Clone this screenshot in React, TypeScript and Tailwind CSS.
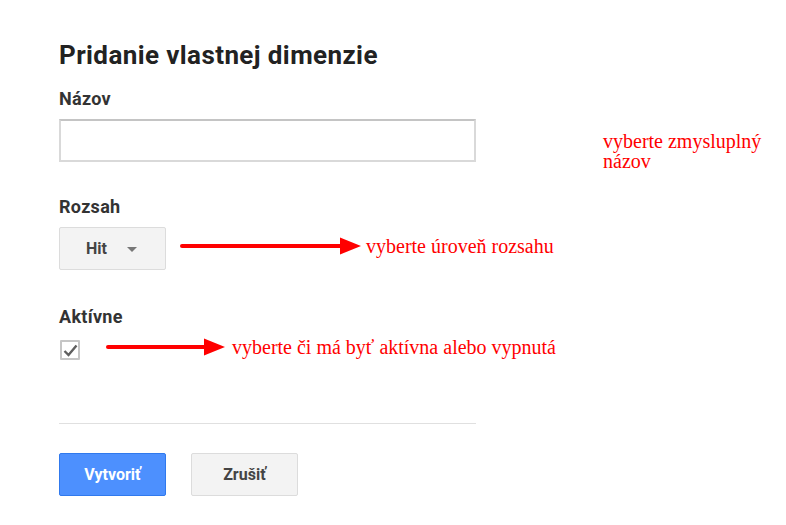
import React from "react";

// Pridanie vlastnej dimenzie — form with red annotations

function Arrow({ width }: { width: number }) {
  return (
    <svg width={width} height={18} viewBox={`0 0 ${width} 18`} className="shrink-0">
      <line x1={2} y1={9} x2={width - 18} y2={9} stroke="#ff0000" strokeWidth={4} strokeLinecap="round" />
      <polygon points={`${width - 21},0.5 ${width},9 ${width - 21},17.5`} fill="#ff0000" />
    </svg>
  );
}

function Note({ children, className = "" }: { children: React.ReactNode; className?: string }) {
  return (
    <span className={`font-['Liberation_Serif',serif] text-[20px] text-[#ff0000] ${className}`}>
      {children}
    </span>
  );
}

export default function App() {
  return (
    <div className="min-h-[525px] w-[786px] bg-white pl-[59px] pt-[38px] font-['Roboto',sans-serif] text-[#333]">
      <h1 className="text-[26px] font-bold leading-[34px] tracking-[0.4px] text-[#222]">Pridanie vlastnej dimenzie</h1>

      {/* Názov */}
      <label className="mt-[16px] block text-[18px] font-bold leading-[22px] tracking-[0.3px] text-[#333]">Názov</label>
      <div className="mt-[9px] flex h-[43px] items-start">
        <input
          type="text"
          className="h-[43px] w-[417px] shrink-0 border-2 border-[#d9d9d9] border-t-[#c4c4c4] bg-white outline-none"
        />
        <Note className="ml-[127px] mt-[12px] w-[170px] leading-[20px]">vyberte zmysluplný názov</Note>
      </div>

      {/* Rozsah */}
      <label className="mt-[34px] block text-[18px] font-bold leading-[22px] tracking-[0.3px] text-[#333]">Rozsah</label>
      <div className="mt-[9px] flex items-center">
        <button
          type="button"
          className="flex h-[43px] w-[107px] items-center rounded-[2px] border border-[#dcdcdc] bg-[#f3f3f3] pl-[26px] text-[16px] font-bold text-[#444]"
        >
          Hit
          <span className="ml-[20px] mt-[2px] h-0 w-0 border-x-[5px] border-t-[5px] border-x-transparent border-t-[#777]" />
        </button>
        <div className="-mt-[6px] ml-[14px] flex items-center">
          <Arrow width={181} />
          <Note className="ml-[5px] leading-[22px]">vyberte úroveň rozsahu</Note>
        </div>
      </div>

      {/* Aktívne */}
      <label className="mt-[36px] block text-[18px] font-bold leading-[22px] tracking-[0.3px] text-[#333]">Aktívne</label>
      <div className="mt-[8px] flex items-start">
        <span className="ml-[1px] mt-[4px] flex h-[20px] w-[20px] items-center justify-center rounded-[1px] border-2 border-[#c6c6c6] bg-white">
          <svg width={15} height={13} viewBox="0 0 15 13">
            <path d="M1.5 7 L5.5 11 L13.5 1.5" fill="none" stroke="#5f5f5f" strokeWidth={2.4} />
          </svg>
        </span>
        <div className="ml-[26px] flex items-center">
          <Arrow width={119} />
          <Note className="ml-[7px] leading-[22px]">vyberte či má byť aktívna alebo vypnutá</Note>
        </div>
      </div>

      <div className="mt-[63px] h-[1px] w-[417px] bg-[#e0e0e0]" />

      <div className="mt-[29px] flex gap-[25px]">
        <button
          type="button"
          className="h-[43px] w-[107px] rounded-[2px] border border-[#3079ed] bg-[#4d90fe] text-[16px] font-bold text-white"
        >
          Vytvoriť
        </button>
        <button
          type="button"
          className="h-[43px] w-[107px] rounded-[2px] border border-[#dcdcdc] bg-[#f3f3f3] text-[16px] font-bold text-[#444]"
        >
          Zrušiť
        </button>
      </div>
    </div>
  );
}
